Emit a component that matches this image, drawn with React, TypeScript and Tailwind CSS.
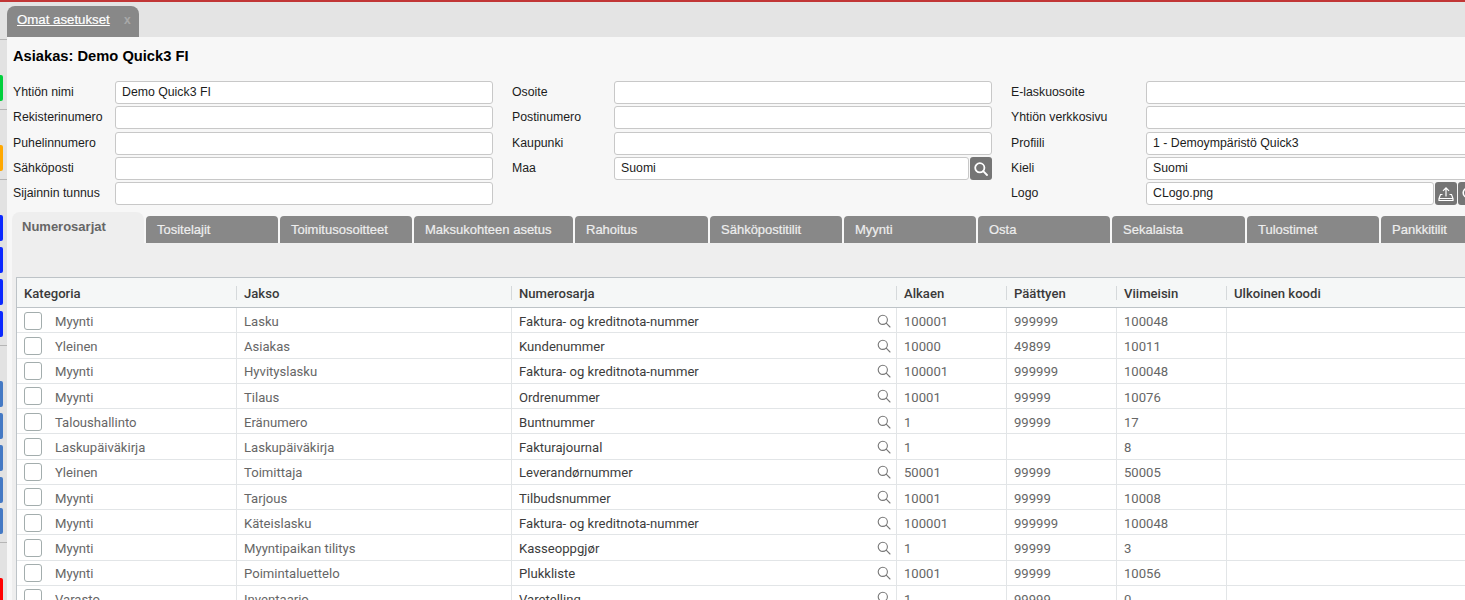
import React from "react";

const sans = "font-['Liberation_Sans',Arial,sans-serif]";

function Magnifier({ className, sw = 1.2 }: { className?: string; sw?: number }) {
  return (
    <svg viewBox="0 0 14 14" className={className} fill="none" stroke="currentColor" strokeWidth={sw} strokeLinecap="round">
      <circle cx="5.8" cy="5.8" r="4.6" />
      <path d="M9.2 9.2 L13 13" />
    </svg>
  );
}

function Field({ label, value, w, children, labelW }: { label: string; value?: string; w: string; labelW: string; children?: React.ReactNode }) {
  return (
    <div className="flex items-center h-[25.3px]">
      <div className={`${labelW} shrink-0 pb-px text-[12.3px] text-[#1c1c1c]`}>{label}</div>
      <div className={`${w} shrink-0 flex h-[23px] gap-px`}>
        <div className="flex-1 min-w-0 bg-white border border-[#c8c8c8] rounded-[3px] px-[6px] pb-px flex items-center text-[12.3px] text-[#1c1c1c]">{value}</div>
        {children}
      </div>
    </div>
  );
}

const Btn = ({ children }: { children: React.ReactNode }) => (
  <div className="w-[22px] h-[23px] shrink-0 rounded-[3px] bg-[#757575] text-white flex items-center justify-center">{children}</div>
);

const tabs = [
  ["Tositelajit", "w-[132px]"],
  ["Toimitusosoitteet", "w-[132px]"],
  ["Maksukohteen asetus", "w-[159px]"],
  ["Rahoitus", "w-[133px]"],
  ["Sähköpostitilit", "w-[132px]"],
  ["Myynti", "w-[132px]"],
  ["Osta", "w-[132px]"],
  ["Sekalaista", "w-[133px]"],
  ["Tulostimet", "w-[132px]"],
  ["Pankkitilit", "w-[132px]"],
] as const;

const rows = [
  ["Myynti", "Lasku", "Faktura- og kreditnota-nummer", "100001", "999999", "100048"],
  ["Yleinen", "Asiakas", "Kundenummer", "10000", "49899", "10011"],
  ["Myynti", "Hyvityslasku", "Faktura- og kreditnota-nummer", "100001", "999999", "100048"],
  ["Myynti", "Tilaus", "Ordrenummer", "10001", "99999", "10076"],
  ["Taloushallinto", "Eränumero", "Buntnummer", "1", "99999", "17"],
  ["Laskupäiväkirja", "Laskupäiväkirja", "Fakturajournal", "1", "", "8"],
  ["Yleinen", "Toimittaja", "Leverandørnummer", "50001", "99999", "50005"],
  ["Myynti", "Tarjous", "Tilbudsnummer", "10001", "99999", "10008"],
  ["Myynti", "Käteislasku", "Faktura- og kreditnota-nummer", "100001", "999999", "100048"],
  ["Myynti", "Myyntipaikan tilitys", "Kasseoppgjør", "1", "99999", "3"],
  ["Myynti", "Poimintaluettelo", "Plukkliste", "10001", "99999", "10056"],
  ["Varasto", "Inventaario", "Varetelling", "1", "99999", "0"],
];

const cols = "grid grid-cols-[219px_275px_385px_110px_110px_110px_260px]";

function Rail() {
  const Sep = ({ mt }: { mt: string }) => <div className={`${mt} h-px w-[7px] shrink-0 bg-[#b5b5b5]`} />;
  const Bar = ({ mt, c }: { mt: string; c: string }) => <div className={`${mt} w-[3px] h-[26px] shrink-0 rounded-r-[2px] ${c}`} />;
  return (
    <div className="w-[7px] shrink-0 bg-[#e2e2e2] flex flex-col overflow-hidden">
      <Sep mt="mt-[37px]" />
      <Bar mt="mt-[35px]" c="bg-[#00d03c]" />
      <Sep mt="mt-[8px]" />
      <Bar mt="mt-[35px]" c="bg-[#ffa800]" />
      <Sep mt="mt-[8px]" />
      <Bar mt="mt-[35px]" c="bg-[#0a28ff]" />
      <Bar mt="mt-[6px]" c="bg-[#0a28ff]" />
      <Bar mt="mt-[6px]" c="bg-[#0a28ff]" />
      <Bar mt="mt-[6px]" c="bg-[#0a28ff]" />
      <Sep mt="mt-[8px]" />
      <Bar mt="mt-[35px]" c="bg-[#4479c4]" />
      <Bar mt="mt-[6px]" c="bg-[#4479c4]" />
      <Bar mt="mt-[6px]" c="bg-[#4479c4]" />
      <Bar mt="mt-[6px]" c="bg-[#4479c4]" />
      <Bar mt="mt-[5px]" c="bg-[#4479c4]" />
      <Sep mt="mt-[8px]" />
      <div className="mt-[35px] w-[3px] h-[30px] shrink-0 rounded-tr-[2px] bg-[#ff0000]" />
    </div>
  );
}

export default function App() {
  return (
    <div className={`${sans} w-[1465px] h-[600px] overflow-hidden flex flex-col bg-[#f7f7f7]`}>
      <div className="h-[2px] shrink-0 bg-[#c13636]" />
      <div className="flex flex-1 min-h-0">
        <Rail />
        <div className="flex-1 min-w-0 flex flex-col overflow-hidden">
          <div className="h-[35px] shrink-0 bg-[#e4e4e4] flex items-end">
            <div className="w-[132px] h-[31px] rounded-t-[8px] bg-[#888888] flex items-center pl-[10px] pb-[4px] text-[13.25px] text-white">
              <span className="underline w-[107px] [-webkit-text-stroke:0.2px_white]">Omat asetukset</span>
              <span className="text-[#a8a8a8] text-[12px] font-bold">x</span>
            </div>
          </div>

          <div className="pl-[6px] pt-[8px] h-[35px] shrink-0 text-[14.7px] font-bold text-black">Asiakas: Demo Quick3 FI</div>

          <div className="flex pl-[6px] pt-[8px] h-[140px] shrink-0">
            <div className="w-[499px] shrink-0">
              <Field labelW="w-[102px]" w="w-[378px]" label="Yhtiön nimi" value="Demo Quick3 FI" />
              <Field labelW="w-[102px]" w="w-[378px]" label="Rekisterinumero" />
              <Field labelW="w-[102px]" w="w-[378px]" label="Puhelinnumero" />
              <Field labelW="w-[102px]" w="w-[378px]" label="Sähköposti" />
              <Field labelW="w-[102px]" w="w-[378px]" label="Sijainnin tunnus" />
            </div>
            <div className="w-[499px] shrink-0">
              <Field labelW="w-[102px]" w="w-[378px]" label="Osoite" />
              <Field labelW="w-[102px]" w="w-[378px]" label="Postinumero" />
              <Field labelW="w-[102px]" w="w-[378px]" label="Kaupunki" />
              <Field labelW="w-[102px]" w="w-[378px]" label="Maa" value="Suomi">
                <Btn><Magnifier className="w-[14px] h-[14px]" sw={1.8} /></Btn>
              </Field>
            </div>
            <div className="shrink-0">
              <Field labelW="w-[135px]" w="w-[334px]" label="E-laskuosoite" />
              <Field labelW="w-[135px]" w="w-[334px]" label="Yhtiön verkkosivu" />
              <Field labelW="w-[135px]" w="w-[334px]" label="Profiili" value="1 - Demoympäristö Quick3" />
              <Field labelW="w-[135px]" w="w-[334px]" label="Kieli" value="Suomi" />
              <Field labelW="w-[135px]" w="w-[334px]" label="Logo" value="CLogo.png">
                <Btn>
                  <svg viewBox="0 0 16 16" className="w-[16px] h-[16px]" fill="none" stroke="currentColor" strokeWidth="1.2">
                    <path d="M8 10.5V2M5 4.8 8 1.8l3 3" />
                    <path d="M4.5 8.5H2.5L1 12.5v2h14v-2l-1.5-4h-2M1.5 12.5h13" />
                  </svg>
                </Btn>
                <Btn><Magnifier className="w-[14px] h-[14px]" sw={1.6} /></Btn>
              </Field>
            </div>
          </div>

          <div className="flex-1 min-h-0 ml-[5px] flex flex-col">
            <div className="flex h-[31px] shrink-0 items-end gap-[2px]">
              <div className="w-[132px] h-[31px] shrink-0 rounded-t-[8px] bg-[#eeeeee] px-[10px] pt-[5px] text-[13px] font-bold text-[#666]">Numerosarjat</div>
              {tabs.map(([t, w]) => (
                <div key={t} className={`${w} h-[27px] shrink-0 rounded-t-[4px] bg-[#888888] pl-[11px] pt-px flex items-center text-[13px] text-[#eeeeee] [-webkit-text-stroke:0.2px_#eeeeee]`}>{t}</div>
              ))}
            </div>
            <div className="flex-1 min-h-0 bg-[#eeeeee] pt-[34px] pl-[4px] overflow-hidden">
              <div className="w-[1470px] border-t border-l border-[#bdc3c7] bg-white font-['Roboto',sans-serif] text-[13.1px]">
                <div className={`${cols} h-[30px] bg-[#f5f7f7] border-b border-[#bdc3c7] items-center text-[#3a3a3a] font-medium`}>
                  {["Kategoria", "Jakso", "Numerosarja", "Alkaen", "Päättyen", "Viimeisin", "Ulkoinen koodi"].map((h, i) => (
                    <div key={h} className={`h-[14px] flex items-center pl-[7px] pt-[2px] ${i ? "border-l border-[#d5d9db]" : ""}`}>{h}</div>
                  ))}
                </div>
                {rows.map((r, i) => (
                  <div key={i} className={`${cols} h-[25.25px] border-b border-[#e2e5e7] items-stretch text-[#666]`}>
                    <div className="flex items-center pl-[7px] gap-[13px]">
                      <div className="w-[18px] h-[18px] mt-px rounded-[3px] border-[1.5px] border-[#a3adad] bg-white shrink-0" />
                      <span className="pt-[3px]">{r[0]}</span>
                    </div>
                    <div className="flex items-center pl-[7px] pt-[3px] border-l border-[#e2e5e7]">{r[1]}</div>
                    <div className="flex items-center pl-[7px] pr-[5px] justify-between border-l border-[#e2e5e7]">
                      <span className="text-[#3c3c3c] pt-[3px]">{r[2]}</span>
                      <Magnifier className="w-[14px] h-[14px] mt-px text-[#777]" sw={1.1} />
                    </div>
                    <div className="flex items-center pl-[7px] pt-[3px] border-l border-[#e2e5e7]">{r[3]}</div>
                    <div className="flex items-center pl-[7px] pt-[3px] border-l border-[#e2e5e7]">{r[4]}</div>
                    <div className="flex items-center pl-[7px] pt-[3px] border-l border-[#e2e5e7]">{r[5]}</div>
                    <div className="border-l border-[#e2e5e7]" />
                  </div>
                ))}
              </div>
            </div>
          </div>
        </div>
      </div>
    </div>
  );
}
